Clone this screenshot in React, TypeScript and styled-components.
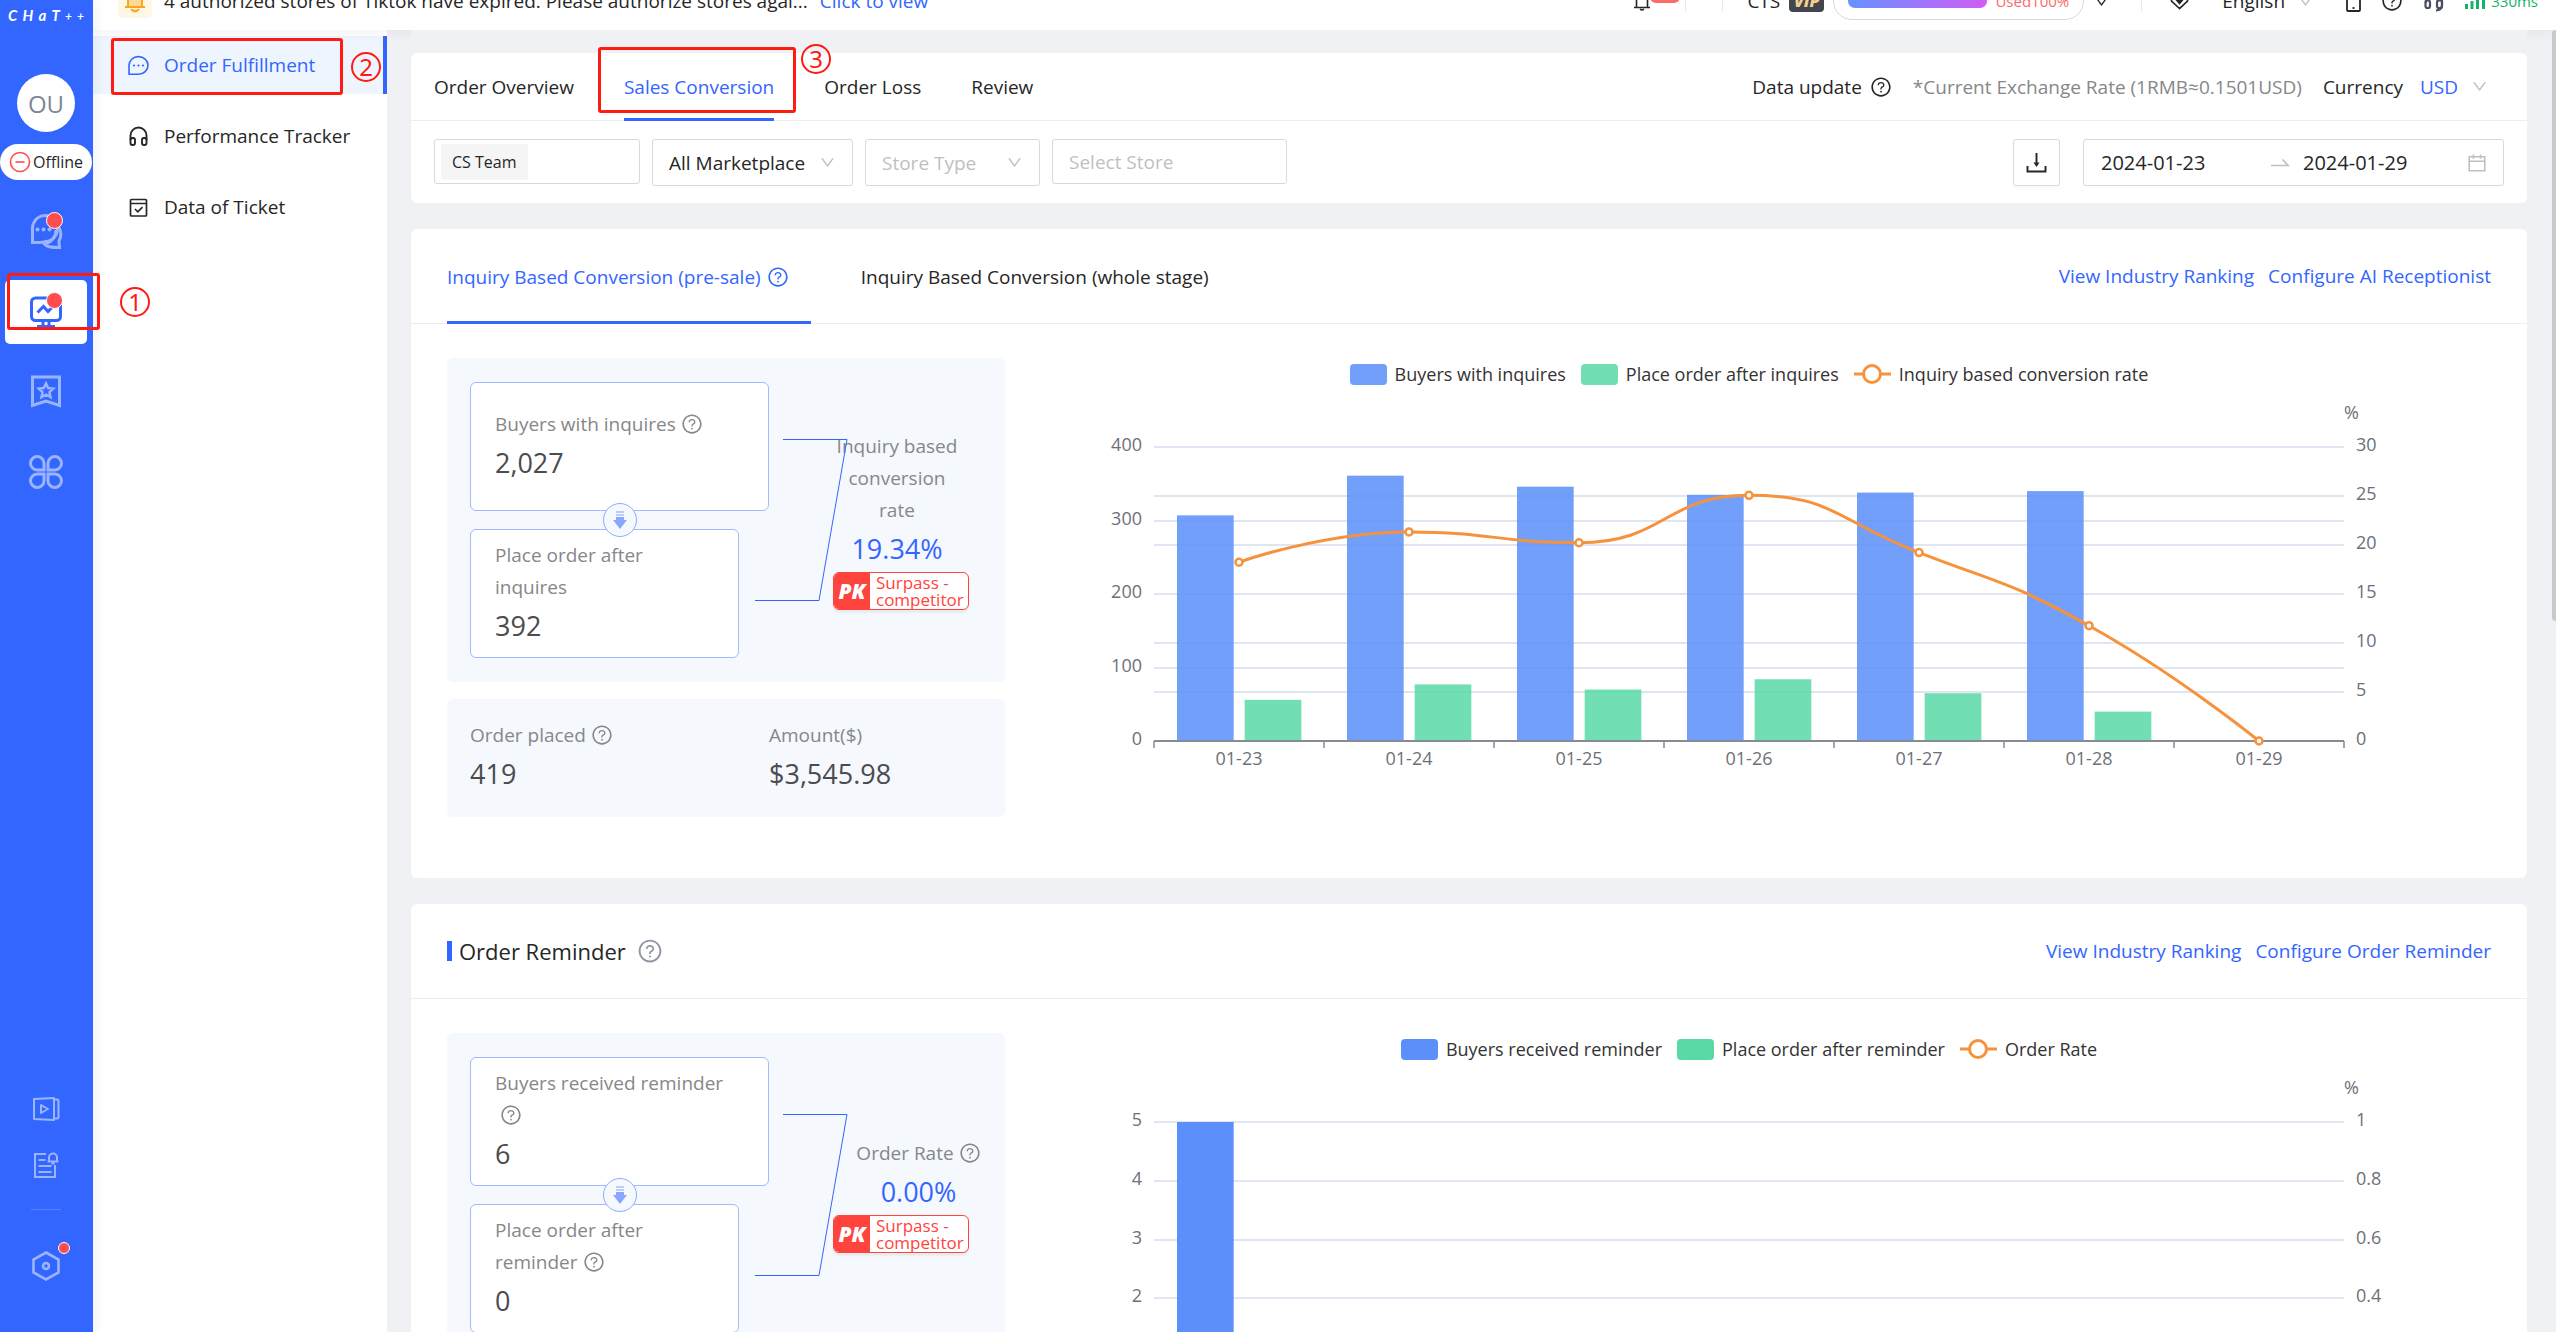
import React, { useLayoutEffect, useRef, useState } from "react";
import styled, { createGlobalStyle, css } from "styled-components";
import { AiOutlineQuestionCircle, AiOutlineDown, AiOutlineCalendar } from "react-icons/ai";

const BLUE = "#3366ff";
const RED = "#ff433d";
const MARK = "#ff1a12";
const INK = "#262626";
const MUTED = "#868789";

const Global = createGlobalStyle`
  *, *::before, *::after { box-sizing: border-box; }
  body { margin: 0; overflow: hidden; }
  body, button, input, select {
    font-family: "Open Sans", "Noto Sans", sans-serif;
    font-size: 19px;
    color: ${INK};
  }
  button { padding: 0; border: 0; background: none; cursor: pointer; }
  a { color: ${BLUE}; text-decoration: none; }
  svg { display: block; flex: none; }
`;

/* ---------- shell ---------- */

const Shell = styled.div`
  position: relative;
  display: flex;
  height: 100vh;
  overflow: hidden;
  background: #eff1f5;
`;

const Rail = styled.nav`
  position: relative;
  z-index: 3;
  flex: none;
  display: flex;
  flex-direction: column;
  align-items: center;
  width: 93px;
  padding: 8px 1px 38px 0;
  background: ${BLUE};
  box-shadow: 2px 0 12px rgba(0, 0, 0, 0.06);
`;

const Logo = styled.div`
  display: flex;
  align-items: flex-end;
  justify-content: space-between;
  width: 76px;
  height: 14px;
  font: italic 700 15px/14px Lato, sans-serif;
  color: #fff;
  small {
    font-size: 12px;
    line-height: 12px;
  }
`;

const Avatar = styled.button`
  width: 58px;
  height: 58px;
  margin-top: 52px;
  border-radius: 50%;
  background: #fff;
  font-size: 24px;
  color: #7d8795;
`;

const Status = styled.button`
  display: flex;
  align-items: center;
  justify-content: center;
  gap: 2px;
  width: 92px;
  height: 36px;
  margin-top: 12px;
  border-radius: 18px;
  background: #fff;
  font-size: 16px;
`;

const RailList = styled.div`
  display: flex;
  flex-direction: column;
  align-items: center;
  gap: 16px;
  margin-top: 20px;
`;

const RailFoot = styled.div`
  display: flex;
  flex-direction: column;
  align-items: center;
  margin-top: auto;
`;

const RailButton = styled.button<{ $active?: boolean; $small?: boolean }>`
  position: relative;
  display: flex;
  align-items: center;
  justify-content: center;
  width: 82px;
  height: ${(p) => (p.$small ? 56 : 64)}px;
  border-radius: 5px;
  background: ${(p) => (p.$active ? "#fff" : "transparent")};
  color: ${(p) => (p.$active ? BLUE : "#9bb4ff")};
`;

const Dot = styled.span<{ $small?: boolean }>`
  position: absolute;
  top: ${(p) => (p.$small ? 4 : 12)}px;
  right: ${(p) => (p.$small ? 17 : 24)}px;
  width: ${(p) => (p.$small ? 12 : 17)}px;
  height: ${(p) => (p.$small ? 12 : 17)}px;
  border: 1px solid #fff;
  border-radius: 50%;
  background: #ff4d4f;
`;

const RailRule = styled.hr`
  width: 30px;
  height: 1px;
  margin: 16px 0 28px;
  border: 0;
  background: #5580ff;
`;

const Column = styled.div`
  flex: 1;
  min-width: 0;
  display: flex;
  flex-direction: column;
`;

/* ---------- top bar ---------- */

const TopBar = styled.header`
  position: relative;
  z-index: 1;
  flex: none;
  display: flex;
  align-items: flex-end;
  height: 30px;
  background: #fff;
  box-shadow: 0 2px 14px rgba(0, 0, 0, 0.06);
  clip-path: inset(0 0 -20px 0);
`;

const TopInner = styled.div`
  flex: 1;
  display: flex;
  align-items: center;
  height: 58px;
  padding: 0 18px 0 25px;
`;

const Notice = styled.div`
  display: flex;
  align-items: center;
  gap: 12px;
  margin-right: auto;
`;

const BellTile = styled.span`
  display: flex;
  align-items: center;
  justify-content: center;
  width: 34px;
  height: 34px;
  border-radius: 4px;
  background: #fff7e6;
`;

const TopSlot = styled.div<{ $ml: number; $gap?: number }>`
  display: flex;
  align-items: center;
  gap: ${(p) => p.$gap ?? 0}px;
  margin-left: ${(p) => p.$ml}px;
`;

const Badge = styled.span`
  align-self: flex-start;
  width: 30px;
  height: 12px;
  border-radius: 6px;
  background: #ff6b6b;
`;

const Rule = styled.span`
  width: 1px;
  height: 22px;
  background: #e8e8e8;
`;

const Vip = styled.span`
  width: 35px;
  height: 22px;
  border-radius: 4px;
  background: #42464f;
  font: italic 800 16px/22px "Open Sans", sans-serif;
  text-align: center;
  color: #f5cf8e;
`;

const Quota = styled.div`
  display: flex;
  align-items: center;
  gap: 8px;
  width: 251px;
  height: 38px;
  padding: 0 14px;
  border: 1px solid #d5d9e2;
  border-radius: 20px;
  font-size: 15px;
  color: #f56c6c;
`;

const QuotaBar = styled.span`
  flex: 1;
  height: 14px;
  border-radius: 7px;
  background: linear-gradient(90deg, #6692ff, #a571fa 60%, #d15df2);
`;

const Ping = styled.span`
  font-size: 15px;
  color: #16b364;
`;

const PlainSelect = styled.select<{ $w: number; $blue?: boolean }>`
  appearance: none;
  width: ${(p) => p.$w}px;
  padding: 0;
  border: 0;
  background: none;
  outline: none;
  color: ${(p) => (p.$blue ? BLUE : INK)};
`;

const Chevron = styled(AiOutlineDown)<{ $dark?: boolean }>`
  width: 17px;
  height: 17px;
  color: ${(p) => (p.$dark ? INK : "#bfbfbf")};
  pointer-events: none;
`;

/* ---------- side menu ---------- */

const Body = styled.div`
  flex: 1;
  min-height: 0;
  display: flex;
`;

const Menu = styled.aside`
  flex: none;
  display: flex;
  flex-direction: column;
  gap: 13px;
  width: 294px;
  padding-top: 6px;
  background: #fff;
`;

const MenuItem = styled.a<{ $active?: boolean }>`
  display: flex;
  align-items: center;
  gap: 15px;
  height: 58px;
  padding-left: 35px;
  color: ${INK};
  ${(p) =>
    p.$active &&
    css`
      border-right: 4px solid ${BLUE};
      background: #eef5ff;
      color: ${BLUE};
    `}
`;

/* ---------- content ---------- */

const Content = styled.main`
  position: relative;
  z-index: 2;
  flex: 1;
  min-width: 0;
  display: flex;
  flex-direction: column;
  gap: 26px;
  margin: 0 29px 0 24px;
  padding-top: 23px;
  overflow: hidden;
  background: #eff1f5;
`;

const Card = styled.section`
  flex: none;
  border-radius: 6px;
  background: #fff;
`;

const Bar = styled.div<{ $h: number; $pad: string }>`
  display: flex;
  align-items: center;
  justify-content: space-between;
  height: ${(p) => p.$h}px;
  padding: ${(p) => p.$pad};
  border-bottom: 1px solid #ededed;
`;

const Tabs = styled.div`
  display: flex;
  align-self: stretch;
  gap: 50px;
`;

const Tab = styled.button<{ $active?: boolean; $pr?: number }>`
  display: flex;
  align-items: center;
  gap: 6px;
  margin-bottom: -1px;
  padding: 3px ${(p) => p.$pr ?? 0}px 0 0;
  border-bottom: 3px solid ${(p) => (p.$active ? BLUE : "transparent")};
  color: ${(p) => (p.$active ? BLUE : INK)};
`;

const Inline = styled.div<{ $gap: number }>`
  display: flex;
  align-items: center;
  gap: ${(p) => p.$gap}px;
`;

const Muted = styled.span`
  color: ${MUTED};
`;

const Help = styled(AiOutlineQuestionCircle)<{ $s?: number }>`
  flex: none;
  width: ${(p) => p.$s ?? 22}px;
  height: ${(p) => p.$s ?? 22}px;
`;

const Filters = styled.div`
  display: flex;
  align-items: flex-start;
  gap: 12px;
  padding: 18px 23px 17px;
`;

const Field = styled.label<{ $w: number; $short?: boolean }>`
  display: flex;
  align-items: center;
  width: ${(p) => p.$w}px;
  height: ${(p) => (p.$short ? 45 : 47)}px;
  padding: 0 16px;
  border: 1px solid #d9d9d9;
  border-radius: 3px;
  background: #fff;
`;

const TagField = styled(Field)`
  padding: 0 6px;
`;

const Tag = styled.span`
  flex: none;
  height: 36px;
  padding: 0 11px;
  border-radius: 3px;
  background: #f5f5f5;
  font-size: 16px;
  line-height: 36px;
`;

const TextInput = styled.input`
  flex: 1;
  min-width: 0;
  width: 100%;
  padding: 0;
  border: 0;
  outline: none;
  background: none;
  &::placeholder {
    color: #bfbfbf;
  }
`;

const FieldSelect = styled.select<{ $empty?: boolean }>`
  appearance: none;
  flex: 1;
  min-width: 0;
  padding: 0;
  border: 0;
  outline: none;
  background: none;
  color: ${(p) => (p.$empty ? "#bfbfbf" : INK)};
`;

const IconButton = styled.button`
  display: flex;
  align-items: center;
  justify-content: center;
  width: 47px;
  height: 47px;
  margin-left: auto;
  border: 1px solid #d9d9d9;
  border-radius: 3px;
  box-shadow: 0 2px 0 rgba(0, 0, 0, 0.02);
`;

const DateRange = styled.div`
  display: flex;
  align-items: center;
  gap: 13px;
  width: 421px;
  height: 47px;
  margin-left: 11px;
  padding: 0 15px 0 17px;
  border: 1px solid #d9d9d9;
  border-radius: 3px;
`;

const DateInput = styled(TextInput)<{ $w?: number }>`
  font-size: 20px;
  ${(p) =>
    p.$w &&
    css`
      flex: none;
      width: ${p.$w}px;
    `}
`;

const Calendar = styled(AiOutlineCalendar)`
  width: 22px;
  height: 22px;
  color: #bfbfbf;
`;

const SectionTitle = styled.h2`
  display: flex;
  align-items: center;
  margin: 0;
  font-size: 22px;
  font-weight: 500;
  &::before {
    content: "";
    width: 5px;
    height: 20px;
    margin-right: 7px;
    background: ${BLUE};
  }
`;

const TitleHelp = styled(Help)`
  margin-left: 11px;
  color: #8e95a1;
`;

const SectionBody = styled.div`
  display: flex;
  padding: 34px 34px 61px 36px;
`;

const Left = styled.div`
  flex: none;
  display: flex;
  flex-direction: column;
  gap: 17px;
  width: 558px;
`;

const Panel = styled.div`
  position: relative;
  display: flex;
  padding: 24px 23px;
  border-radius: 6px;
  background: #f5f8fd;
`;

const Steps = styled.div`
  position: relative;
  display: flex;
  flex-direction: column;
  gap: 18px;
  width: 299px;
`;

const Step = styled.div<{ $w: number }>`
  display: flex;
  flex-direction: column;
  justify-content: center;
  width: ${(p) => p.$w}px;
  height: 129px;
  padding: 0 24px;
  border: 1px solid #a3baff;
  border-radius: 6px;
  background: #fff;
`;

const Label = styled.div`
  line-height: 32px;
  color: ${MUTED};
  svg {
    display: inline-block;
    margin-left: 5px;
    vertical-align: -4px;
  }
`;

const Value = styled.div<{ $blue?: boolean }>`
  font-size: 27px;
  line-height: 46px;
  color: ${(p) => (p.$blue ? BLUE : "#4a4c50")};
`;

const DownMark = styled.span`
  position: absolute;
  left: 133px;
  top: 121px;
  display: flex;
  align-items: center;
  justify-content: center;
  width: 34px;
  height: 34px;
  border: 1px solid #8fabff;
  border-radius: 50%;
  background: #f5f8fd;
`;

const Connector = styled.svg`
  position: absolute;
  left: 308px;
  top: 80px;
`;

const Rate = styled.div`
  position: relative;
  display: flex;
  flex-direction: column;
  justify-content: center;
  width: 149px;
  margin-left: 64px;
`;

const RateText = styled.div<{ $icon?: boolean }>`
  text-align: center;
  ${(p) =>
    p.$icon
      ? css`
          margin-left: 22px;
          white-space: nowrap;
        `
      : css`
          width: 128px;
        `}
`;

const Surpass = styled.button`
  display: flex;
  align-items: center;
  width: 136px;
  height: 38px;
  overflow: hidden;
  border: 1px solid ${RED};
  border-radius: 6px;
  background: #fff;
  box-shadow: 0 3px 2px rgba(0, 0, 0, 0.05);
  font-size: 17px;
  line-height: 17px;
  text-align: left;
  color: ${RED};
`;

const PK = styled.span`
  flex: none;
  align-self: stretch;
  width: 36px;
  margin-right: 6px;
  background: ${RED};
  font: italic 800 21px/36px "Open Sans", sans-serif;
  text-align: center;
  color: #fff;
`;

const Stats = styled(Panel)`
  padding: 20px 23px;
  & > div {
    width: 299px;
  }
  & > div + div {
    width: auto;
  }
`;

const ChartBox = styled.div`
  flex: 1;
  min-width: 0;
  display: flex;
  flex-direction: column;
`;

const Legend = styled.div`
  display: flex;
  align-items: center;
  justify-content: center;
  gap: 15px;
  height: 32px;
  font-size: 18px;
  color: #333;
  span {
    display: flex;
    align-items: center;
    gap: 8px;
  }
`;

const Swatch = styled.i<{ $c: string; $o: number }>`
  width: 37px;
  height: 21px;
  border-radius: 4px;
  background: ${(p) => p.$c};
  opacity: ${(p) => p.$o};
`;

const Plot = styled.svg`
  font-size: 18px;
  fill: #6e7079;
`;

const ScrollThumb = styled.div`
  position: absolute;
  z-index: 4;
  top: 30px;
  right: 0;
  width: 4px;
  height: 591px;
  border-radius: 4px 0 0 4px;
  background: #c8c9cb;
`;

/* ---------- tutorial marks ---------- */

const MarkBox = styled.div<{ $x: number; $y: number; $w: number; $h: number }>`
  position: absolute;
  z-index: 5;
  left: ${(p) => p.$x}px;
  top: ${(p) => p.$y}px;
  width: ${(p) => p.$w}px;
  height: ${(p) => p.$h}px;
  border: 3px solid ${MARK};
  border-radius: 3px;
  pointer-events: none;
`;

const MarkNumber = styled.span<{ $x: number; $y: number }>`
  position: absolute;
  z-index: 5;
  left: ${(p) => p.$x}px;
  top: ${(p) => p.$y}px;
  width: 30px;
  height: 30px;
  border: 2px solid ${MARK};
  border-radius: 50%;
  font: 24px/26px "Noto Sans", sans-serif;
  text-align: center;
  color: ${MARK};
`;

/* ---------- icons ---------- */

const stroke = { fill: "none", stroke: "currentColor" } as const;

const ChatIcon = () => (
  <svg width="34" height="36" viewBox="0 0 34 36" {...stroke} strokeWidth="3">
    <path d="M3.500 28.500V16A12.500 13 0 1 1 17 27.500C13 29 8 28.500 3.500 28.500Z" />
    <path d="M29.500 12.500c3 5 3 10 .5 14.500l.500 6.500c-6 0-13 0-16-4.500" />
    <path d="M27 16c0 7-4 11.500-10 13.500" />
    <g fill="currentColor" stroke="none">
      <circle cx="8.500" cy="15.500" r="2" /><circle cx="14.500" cy="15.500" r="2" /><circle cx="20.500" cy="15.500" r="2" />
    </g>
  </svg>
);

const MonitorIcon = () => (
  <svg width="34" height="32" viewBox="0 0 34 32" {...stroke} strokeWidth="3">
    <rect x="2.500" y="2" width="29" height="22.500" rx="4" />
    <path d="M8.500 16.500l6-6 4.500 5 5-5" />
    <path d="M14 25v4M20 25v4M8 30.500h18" />
  </svg>
);

const BookmarkIcon = () => (
  <svg width="32" height="34" viewBox="0 0 32 34" {...stroke} strokeWidth="3">
    <path d="M2.500 2h27v28.500L16 26 2.500 30.500Z" />
    <path d="M16 8.500l2.200 4.600 5 .6-3.700 3.500 1 5L16 19.700l-4.500 2.500 1-5-3.700-3.500 5-.6Z" strokeWidth="2.500" />
  </svg>
);

const GridIcon = () => (
  <svg width="36" height="34" viewBox="0 0 36 34" {...stroke} strokeWidth="3">
    <path d="M16 15V8.500A6.750 6.750 0 1 0 9 15ZM20 15V8.500A6.750 6.750 0 1 1 27 15ZM16 19v6.500A6.750 6.750 0 1 1 9 19ZM20 19v6.500A6.750 6.750 0 1 0 27 19Z" />
  </svg>
);

const VideoIcon = () => (
  <svg width="28" height="26" viewBox="0 0 28 26" {...stroke} strokeWidth="2" strokeLinejoin="round">
    <path d="M2 3l20-1v22L2 23ZM22 3.500h3q1.500 0 1.500 1.500v16q0 1.500-1.500 1.500h-3M9 9l7 4-7 4Z" />
  </svg>
);

const NoteIcon = () => (
  <svg width="28" height="28" viewBox="0 0 28 28" {...stroke} strokeWidth="2">
    <path d="M14 3H3v23h20V14M6.500 9h7M6.500 15h13M6.500 21h13" />
    <path d="M17 10V6.500a4 4 0 0 1 8 0V10M15.500 10.500h11M19.500 12.500h3" />
  </svg>
);

const HexIcon = () => (
  <svg width="30" height="32" viewBox="0 0 30 32" {...stroke} strokeWidth="2.600">
    <path d="M15 2.500l12.500 7v13L15 29.500 2.500 22.500v-13Z" />
    <circle cx="15" cy="16" r="3" />
  </svg>
);

const OfflineIcon = () => (
  <svg width="22" height="22" viewBox="0 0 22 22" fill="none" stroke="#ff4d4f" strokeWidth="1.600">
    <circle cx="11" cy="11" r="9.500" />
    <path d="M6.500 11h9" />
  </svg>
);

const BubbleIcon = () => (
  <svg width="21" height="21" viewBox="0 0 21 21" {...stroke} strokeWidth="1.600">
    <path d="M1 19.200V10.500A9.500 8.800 0 1 1 10.500 19.200Z" strokeLinejoin="round" />
    <g fill="currentColor" stroke="none">
      <circle cx="6" cy="10.500" r="1.100" /><circle cx="10.500" cy="10.500" r="1.100" /><circle cx="15" cy="10.500" r="1.100" />
    </g>
  </svg>
);

const HeadphoneIcon = () => (
  <svg width="21" height="21" viewBox="0 0 21 21" {...stroke} strokeWidth="1.900">
    <path d="M2.500 14V9.500a8 8 0 0 1 16 0V14" />
    <rect x="2.500" y="12" width="4.500" height="7" rx="2" />
    <rect x="14" y="12" width="4.500" height="7" rx="2" />
  </svg>
);

const TicketIcon = () => (
  <svg width="21" height="21" viewBox="0 0 21 21" {...stroke} strokeWidth="1.700">
    <rect x="2.500" y="2.500" width="16" height="16.500" rx="1" />
    <path d="M2.500 6.500h16M7 12l2.800 2.800 4.700-4.600" />
  </svg>
);

const BellIcon = () => (
  <svg width="20" height="24" viewBox="0 0 20 24" fill="#fdd998" stroke="#faa619" strokeWidth="2">
    <path d="M3 18V9a7 7 0 0 1 14 0v9M0 18h20M6 20q4 5 8 0" />
  </svg>
);

const SmallBell = () => (
  <svg width="16" height="20" viewBox="0 0 16 20" {...stroke} strokeWidth="1.600">
    <path d="M2.500 16V8a5.500 5.500 0 0 1 11 0v8M0 16.500h16M6 18q2 2 4 0" />
  </svg>
);

const PinIcon = () => (
  <svg width="19" height="18" viewBox="0 0 19 18" {...stroke} strokeWidth="1.700">
    <path d="M9.500 16.500L1.500 9Q1 1 9.500 1T17.500 9Z" />
    <path d="M7 8.500h5l-2.500 3Z" fill="currentColor" />
  </svg>
);

const PhoneIcon = () => (
  <svg width="15" height="21" viewBox="0 0 15 21" {...stroke} strokeWidth="1.800">
    <rect x="1" y="1" width="13" height="19" rx="1" />
    <path d="M6.500 17h2" />
  </svg>
);

const SupportIcon = () => (
  <svg width="20" height="21" viewBox="0 0 20 21" fill="none" stroke="#4a5060" strokeWidth="2.200">
    <path d="M2 12V9a8 8 0 0 1 16 0v5" />
    <rect x="1.500" y="9.500" width="4.500" height="7.500" rx="2" />
    <rect x="13" y="9.500" width="5" height="7.500" rx="2" />
    <path d="M18 14q0 5-6 5.500" />
  </svg>
);

const SignalIcon = () => (
  <svg width="20" height="16" viewBox="0 0 20 16" fill="#16b364">
    <path d="M0 11h3v5H0zM5.500 8h3v8h-3zM11 4h3v12h-3zM17 0h3v16h-3z" />
  </svg>
);

const DownloadIcon = () => (
  <svg width="21" height="22" viewBox="0 0 21 22" {...stroke} strokeWidth="1.900">
    <path d="M10.500 1v11M1.500 14v5.500h18V14" />
    <path d="M7.500 10.500h6l-3 4.500Z" fill="currentColor" stroke="none" />
  </svg>
);

const SwapIcon = () => (
  <svg width="19" height="9" viewBox="0 0 19 9" fill="none" stroke="#bfbfbf" strokeWidth="1.700">
    <path d="M0 7.500h17L11.500 1.500" />
  </svg>
);

const ArrowIcon = () => (
  <svg width="14" height="20" viewBox="0 0 14 20" fill="#8aa7ff">
    <path d="M3 1h8v2H3zM3 4h8v2H3z" opacity=".55" />
    <path d="M3 7h8v3h3l-7 9-7-9h3z" />
  </svg>
);

/* ---------- chart ---------- */

type Pt = [number, number];

/** Cubic smoothing that keeps every control point inside its own segment. */
function smoothPath(pts: Pt[], smooth = 0.5) {
  let d = `M${pts[0][0]} ${pts[0][1]}`;
  let c0: Pt = pts[0];
  const clamp = (v: number, a: number, b: number) => Math.max(Math.min(v, Math.max(a, b)), Math.min(a, b));
  for (let i = 1; i < pts.length; i++) {
    const [x, y] = pts[i];
    const prev = pts[i - 1];
    const next = pts[i + 1];
    let c1: Pt = [x, y];
    let c2: Pt = [x, y];
    if (next) {
      const lp = Math.hypot(x - prev[0], y - prev[1]);
      const ln = Math.hypot(next[0] - x, next[1] - y);
      const r = ln / (ln + lp);
      c2 = [
        clamp(x + (next[0] - prev[0]) * smooth * r, next[0], x),
        clamp(y + (next[1] - prev[1]) * smooth * r, next[1], y),
      ];
      c1 = [
        clamp(x - ((c2[0] - x) * lp) / ln, prev[0], x),
        clamp(y - ((c2[1] - y) * lp) / ln, prev[1], y),
      ];
      c2 = [x + ((x - c1[0]) * ln) / lp, y + ((y - c1[1]) * ln) / lp];
    }
    d += `C${c0[0]} ${c0[1]} ${c1[0]} ${c1[1]} ${x} ${y}`;
    c0 = c2;
  }
  return d;
}

interface ChartProps {
  names: [string, string, string];
  days: string[];
  first: number[];
  second: number[];
  line: number[];
  left: number[];
  right: number[];
  opacity: number;
}

const TOP = 57;
const HEIGHT = 294;

function Chart({ names, days, first, second, line, left, right, opacity }: ChartProps) {
  const ref = useRef<HTMLDivElement>(null);
  const [width, setWidth] = useState(1488);
  useLayoutEffect(() => {
    const el = ref.current;
    if (!el) return;
    const ro = new ResizeObserver(() => setWidth(el.clientWidth));
    setWidth(el.clientWidth);
    ro.observe(el);
    return () => ro.disconnect();
  }, []);

  const x0 = Math.round(width * 0.1);
  const x1 = Math.round(width * 0.9);
  const band = (x1 - x0) / days.length;
  const barW = band / 3;
  const base = TOP + HEIGHT;
  const maxL = left[left.length - 1];
  const maxR = right[right.length - 1];
  const yL = (v: number) => base - (v / maxL) * HEIGHT;
  const yR = (v: number) => base - (v / maxR) * HEIGHT;
  const pts = line.map((v, i): Pt => [x0 + band * (i + 0.5), yR(v)]);
  const levels = [...new Set([...left.map(yL), ...right.map(yR)].map(Math.round))];

  return (
    <ChartBox ref={ref}>
      <Legend>
        <span><Swatch $c="#5b8ff9" $o={opacity} />{names[0]}</span>
        <span><Swatch $c="#5ad8a6" $o={opacity} />{names[1]}</span>
        <span>
          <svg width="37" height="20" fill="#fff" stroke="#f7923c" strokeWidth="3">
            <path d="M0 10h37" />
            <circle cx="18" cy="10" r="8.500" />
          </svg>
          {names[2]}
        </span>
      </Legend>
      <Plot width={width} height={base + 34}>
        {levels.map((y) => (
          <path key={y} d={`M${x0} ${y}H${x1}`} stroke="#e0e6f1" strokeWidth="2" />
        ))}
        {first.map((v, i) => (
          <rect key={i} x={x0 + band * i + 23} y={yL(v)} width={barW} height={base - yL(v)} fill="#5b8ff9" opacity={opacity} />
        ))}
        {second.map((v, i) => (
          <rect key={i} x={x0 + band * i + 34 + barW} y={yL(v)} width={barW} height={base - yL(v)} fill="#5ad8a6" opacity={opacity} />
        ))}
        <path d={`M${x0} ${base}H${x1}`} stroke="#878b95" strokeWidth="2" />
        {Array.from({ length: days.length + 1 }, (_, i) => (
          <path key={i} d={`M${Math.round(x0 + band * i)} ${base}v7`} stroke="#878b95" strokeWidth="1.500" />
        ))}
        {days.map((t, i) => (
          <text key={t} x={x0 + band * (i + 0.5)} y={base + 24} textAnchor="middle">{t}</text>
        ))}
        {left.map((v) => (
          <text key={v} x={x0 - 12} y={yL(v) + 4} textAnchor="end">{v}</text>
        ))}
        {right.map((v) => (
          <text key={v} x={x1 + 12} y={yR(v) + 4}>{v}</text>
        ))}
        <text x={x1} y={TOP - 28}>%</text>
        <path d={smoothPath(pts)} fill="none" stroke="#f7923c" strokeWidth="3" />
        {pts.map(([x, y]) => (
          <circle key={x} cx={x} cy={y} r="3.500" fill="#fff" stroke="#f7923c" strokeWidth="2.500" />
        ))}
      </Plot>
    </ChartBox>
  );
}

/* ---------- composed parts ---------- */

function SurpassBadge() {
  return (
    <Surpass>
      <PK>PK</PK>
      <span>Surpass -<br />competitor</span>
    </Surpass>
  );
}

interface FunnelProps {
  top: [React.ReactNode, string];
  bottom: [React.ReactNode, string];
  rate: [React.ReactNode, string];
  icon?: boolean;
}

function Funnel({ top, bottom, rate, icon }: FunnelProps) {
  return (
    <Panel>
      <Steps>
        <Step $w={299}><Label>{top[0]}</Label><Value>{top[1]}</Value></Step>
        <Step $w={269}><Label>{bottom[0]}</Label><Value>{bottom[1]}</Value></Step>
        <DownMark><ArrowIcon /></DownMark>
      </Steps>
      <Rate>
        <RateText $icon={icon}><Label>{rate[0]}</Label><Value $blue>{rate[1]}</Value></RateText>
        <SurpassBadge />
      </Rate>
      <Connector width="94" height="164" fill="none" stroke={BLUE} strokeWidth="1">
        <path d="M28 1.500H92L64 162.500H0" />
      </Connector>
    </Panel>
  );
}

const DAYS = ["01-23", "01-24", "01-25", "01-26", "01-27", "01-28", "01-29"];
const BUYERS = [307, 361, 346, 335, 338, 340, 0];
const ORDERS = [56, 77, 70, 84, 65, 40, 0];
const RATES = BUYERS.map((b, i) => (b ? (ORDERS[i] / b) * 100 : 0));

export default function App() {
  return (
    <>
      <Global />
      <Shell>
        <Rail>
          <Logo><span>C</span><span>H</span><span>a</span><span>T</span><small>+</small><small>+</small></Logo>
          <Avatar>OU</Avatar>
          <Status><OfflineIcon />Offline</Status>
          <RailList>
            <RailButton aria-label="Chat"><ChatIcon /><Dot /></RailButton>
            <RailButton $active aria-label="Data"><MonitorIcon /><Dot /></RailButton>
            <RailButton aria-label="Favorites"><BookmarkIcon /></RailButton>
            <RailButton aria-label="Apps"><GridIcon /></RailButton>
          </RailList>
          <RailFoot>
            <RailButton $small aria-label="Videos"><VideoIcon /></RailButton>
            <RailButton $small aria-label="Notes"><NoteIcon /></RailButton>
            <RailRule />
            <RailButton $small aria-label="Settings"><HexIcon /><Dot $small /></RailButton>
          </RailFoot>
        </Rail>

        <Column>
          <TopBar>
            <TopInner>
              <Notice>
                <BellTile><BellIcon /></BellTile>
                <span>4 authorized stores of Tiktok have expired. Please authorize stores agai...</span>
                <a href="#view">Click to view</a>
              </Notice>
              <TopSlot $ml={0}><SmallBell /><Badge /></TopSlot>
              <TopSlot $ml={5}><Rule /></TopSlot>
              <TopSlot $ml={36}><Rule /></TopSlot>
              <TopSlot $ml={24} $gap={9}>CTS<Vip>VIP</Vip></TopSlot>
              <TopSlot $ml={9} $gap={9}><Quota><QuotaBar />Used100%</Quota><Chevron $dark /></TopSlot>
              <TopSlot $ml={31}><Rule /></TopSlot>
              <TopSlot $ml={28}><PinIcon /></TopSlot>
              <TopSlot $ml={33} $gap={5}>
                <PlainSelect $w={70} aria-label="Language"><option>English</option></PlainSelect>
                <Chevron />
              </TopSlot>
              <TopSlot $ml={32}><PhoneIcon /></TopSlot>
              <TopSlot $ml={20}><Help /></TopSlot>
              <TopSlot $ml={21}><SupportIcon /></TopSlot>
              <TopSlot $ml={21} $gap={6}><SignalIcon /><Ping>330ms</Ping></TopSlot>
            </TopInner>
          </TopBar>

          <Body>
            <Menu>
              <MenuItem $active href="#fulfillment"><BubbleIcon />Order Fulfillment</MenuItem>
              <MenuItem href="#performance"><HeadphoneIcon />Performance Tracker</MenuItem>
              <MenuItem href="#ticket"><TicketIcon />Data of Ticket</MenuItem>
            </Menu>

            <Content>
              <Card>
                <Bar $h={68} $pad="0 39px 0 23px">
                  <Tabs>
                    <Tab>Order Overview</Tab>
                    <Tab $active>Sales Conversion</Tab>
                    <Tab>Order Loss</Tab>
                    <Tab>Review</Tab>
                  </Tabs>
                  <Inline $gap={21}>
                    <Inline $gap={8}>Data update<Help /></Inline>
                    <Muted>*Current Exchange Rate (1RMB≈0.1501USD)</Muted>
                    <Inline as="label" $gap={17}>
                      Currency
                      <Inline $gap={9}>
                        <PlainSelect $w={42} $blue><option>USD</option></PlainSelect>
                        <Chevron />
                      </Inline>
                    </Inline>
                  </Inline>
                </Bar>
                <Filters>
                  <TagField $w={206} $short><Tag>CS Team</Tag><TextInput aria-label="Team" /></TagField>
                  <Field $w={201}>
                    <FieldSelect aria-label="Marketplace"><option>All Marketplace</option></FieldSelect><Chevron />
                  </Field>
                  <Field $w={175}>
                    <FieldSelect $empty aria-label="Store type"><option>Store Type</option></FieldSelect><Chevron />
                  </Field>
                  <Field $w={235} $short><TextInput aria-label="Store" placeholder="Select Store" /></Field>
                  <IconButton aria-label="Download"><DownloadIcon /></IconButton>
                  <DateRange>
                    <DateInput aria-label="Start date" defaultValue="2024-01-23" />
                    <SwapIcon />
                    <DateInput $w={150} aria-label="End date" defaultValue="2024-01-29" />
                    <Calendar />
                  </DateRange>
                </Filters>
              </Card>

              <Card>
                <Bar $h={95} $pad="0 36px">
                  <Tabs>
                    <Tab $active $pr={22}>Inquiry Based Conversion (pre-sale)<Help /></Tab>
                    <Tab>Inquiry Based Conversion (whole stage)</Tab>
                  </Tabs>
                  <Inline $gap={14}>
                    <a href="#ranking">View Industry Ranking</a>
                    <a href="#receptionist">Configure AI Receptionist</a>
                  </Inline>
                </Bar>
                <SectionBody>
                  <Left>
                    <Funnel
                      top={[<>Buyers with inquires<Help /></>, "2,027"]}
                      bottom={["Place order after inquires", "392"]}
                      rate={["Inquiry based conversion rate", "19.34%"]}
                    />
                    <Stats>
                      <div><Label>Order placed<Help /></Label><Value>419</Value></div>
                      <div><Label>Amount($)</Label><Value>$3,545.98</Value></div>
                    </Stats>
                  </Left>
                  <Chart
                    names={["Buyers with inquires", "Place order after inquires", "Inquiry based conversion rate"]}
                    days={DAYS}
                    first={BUYERS}
                    second={ORDERS}
                    line={RATES}
                    left={[0, 100, 200, 300, 400]}
                    right={[0, 5, 10, 15, 20, 25, 30]}
                    opacity={0.86}
                  />
                </SectionBody>
              </Card>

              <Card>
                <Bar $h={95} $pad="0 36px">
                  <SectionTitle>Order Reminder<TitleHelp $s={26} /></SectionTitle>
                  <Inline $gap={14}>
                    <a href="#ranking2">View Industry Ranking</a>
                    <a href="#reminder">Configure Order Reminder</a>
                  </Inline>
                </Bar>
                <SectionBody>
                  <Left>
                    <Funnel
                      icon
                      top={[<>Buyers received reminder <Help /></>, "6"]}
                      bottom={[<>Place order after reminder<Help /></>, "0"]}
                      rate={[<>Order Rate<Help /></>, "0.00%"]}
                    />
                  </Left>
                  <Chart
                    names={["Buyers received reminder", "Place order after reminder", "Order Rate"]}
                    days={DAYS}
                    first={[5, 0, 0, 0, 0, 0, 0]}
                    second={[0, 0, 0, 0, 0, 0, 0]}
                    line={[0, 0, 0, 0, 0, 0, 0]}
                    left={[0, 1, 2, 3, 4, 5]}
                    right={[0, 0.2, 0.4, 0.6, 0.8, 1]}
                    opacity={1}
                  />
                </SectionBody>
              </Card>
            </Content>
          </Body>
        </Column>

        <ScrollThumb />
        <MarkBox $x={7} $y={273} $w={93} $h={57} />
        <MarkNumber $x={120} $y={287}>1</MarkNumber>
        <MarkBox $x={111} $y={38} $w={232} $h={57} />
        <MarkNumber $x={351} $y={52}>2</MarkNumber>
        <MarkBox $x={598} $y={47} $w={198} $h={66} />
        <MarkNumber $x={801} $y={44}>3</MarkNumber>
      </Shell>
    </>
  );
}
